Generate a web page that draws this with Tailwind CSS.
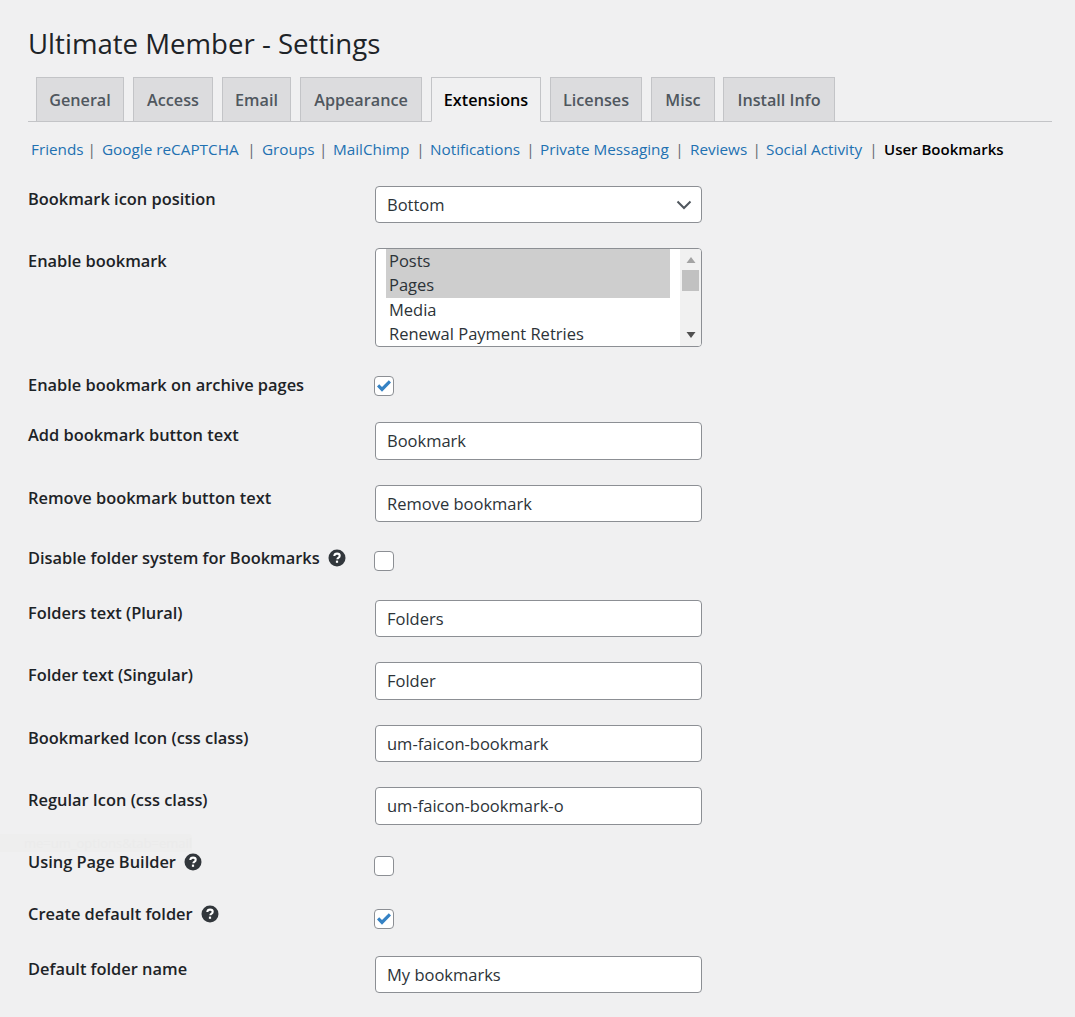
<!DOCTYPE html>
<html lang="en">
<head>
    <meta charset="UTF-8">
    <title>Ultimate Member - Settings</title>
    <script src="https://cdn.jsdelivr.net/npm/@tailwindcss/browser@4"></script>
</head>
<body class="bg-[#f0f0f1] text-[#1d2327] font-['Open_Sans',sans-serif] overflow-hidden">
<div class="relative h-[1017px] w-[1075px] pl-[28px] pr-[23px] pt-[23px]">
    <h1 class="text-[27.6px] leading-[40px] text-[#1d2327]">Ultimate Member - Settings</h1>

    <!-- tabs -->
    <nav class="mt-[14px] flex h-[45px] gap-[9px] border-b border-[#c3c4c7] pl-[8px] text-[16.2px] font-semibold leading-[44px] text-[#50575e]">
        <a class="h-[45px] w-[88px] border border-[#c3c4c7] bg-[#dcdcde] text-center">General</a>
        <a class="h-[45px] w-[80px] border border-[#c3c4c7] bg-[#dcdcde] text-center">Access</a>
        <a class="h-[45px] w-[69px] border border-[#c3c4c7] bg-[#dcdcde] text-center">Email</a>
        <a class="h-[45px] w-[122px] border border-[#c3c4c7] bg-[#dcdcde] text-center">Appearance</a>
        <a class="h-[45px] w-[110px] border border-[#c3c4c7] border-b-[#f0f0f1] bg-[#f0f0f1] text-center text-black">Extensions</a>
        <a class="h-[45px] w-[92px] border border-[#c3c4c7] bg-[#dcdcde] text-center">Licenses</a>
        <a class="h-[45px] w-[64px] border border-[#c3c4c7] bg-[#dcdcde] text-center">Misc</a>
        <a class="-ml-[1px] h-[45px] w-[112px] border border-[#c3c4c7] bg-[#dcdcde] text-center">Install Info</a>
    </nav>

    <!-- sub navigation -->
    <ul class="mt-[15px] flex h-[24px] pl-[3px] text-[15.3px] leading-[24px] text-[#646970]">
        <li class="flex w-[71px]"><a class="flex-1 text-[#2271b1]">Friends</a><span class="w-[19px] pr-[2px] text-center">|</span></li>
        <li class="flex w-[160px]"><a class="flex-1 text-[#2271b1]">Google reCAPTCHA</a><span class="w-[19px] pr-[2px] text-center">|</span></li>
        <li class="flex w-[71px]"><a class="flex-1 text-[#2271b1]">Groups</a><span class="w-[19px] pr-[1px] text-center">|</span></li>
        <li class="flex w-[97px]"><a class="flex-1 text-[#2271b1]">MailChimp</a><span class="w-[19px] text-center">|</span></li>
        <li class="flex w-[110px]"><a class="flex-1 text-[#2271b1]">Notifications</a><span class="w-[19px] text-center">|</span></li>
        <li class="flex w-[150px]"><a class="flex-1 text-[#2271b1]">Private Messaging</a><span class="w-[19px] pr-[2px] text-center">|</span></li>
        <li class="flex w-[76px]"><a class="flex-1 text-[#2271b1]">Reviews</a><span class="w-[19px] text-center">|</span></li>
        <li class="flex w-[118px]"><a class="flex-1 whitespace-nowrap text-[#2271b1]">Social Activity</a><span class="w-[19px] pr-[2px] text-center">|</span></li>
        <li class="font-semibold text-[15px] text-black">User Bookmarks</li>
    </ul>

    <!-- settings form -->
    <form class="mt-[25px] text-[16.4px] leading-[24px]">
        <div class="flex">
            <label class="mt-[1px] w-[347px] font-semibold">Bookmark icon position</label>
            <div class="relative flex h-[37px] w-[327px] items-center rounded-[4px] border border-[#8c8f94] bg-white pl-[11px] text-[16.5px] text-[#2c3338]">
                Bottom
                <svg class="absolute right-[9px] top-[11px] h-[14px] w-[16px]" viewBox="0 0 16 14" fill="none" stroke="#50575e" stroke-width="2"><path d="M1.500 3.500 8 10l6.500-6.500"/></svg>
            </div>
        </div>

        <div class="mt-[25px] flex">
            <label class="mt-[1px] w-[347px] font-semibold">Enable bookmark</label>
            <div class="relative h-[99px] w-[327px] overflow-hidden rounded-[4px] border border-[#8c8f94] bg-white pl-[10px] text-[16.5px] text-[#2c3338]">
                <div class="w-[284px] bg-[#cecece] pl-[3px] h-[24.500px] leading-[23px]">Posts</div>
                <div class="w-[284px] bg-[#cecece] pl-[3px] h-[24.500px] leading-[22px]">Pages</div>
                <div class="pl-[3px] h-[24.500px] leading-[23px]">Media</div>
                <div class="pl-[3px] h-[24.500px] leading-[22px] whitespace-nowrap">Renewal Payment Retries</div>
                <!-- list scrollbar -->
                <div class="absolute bottom-0 right-0 top-0 w-[21px] bg-[#f1f1f1]">
                    <svg class="absolute left-[6px] top-[8px] h-[6px] w-[10px]" viewBox="0 0 10 6"><path d="M5 0l4.500 6h-9z" fill="#a3a3a3"/></svg>
                    <div class="absolute left-[2px] top-[21px] h-[21px] w-[17px] bg-[#c1c1c1]"></div>
                    <svg class="absolute bottom-[8px] left-[6px] h-[6px] w-[10px]" viewBox="0 0 10 6"><path d="M5 6L.5 0h9z" fill="#505050"/></svg>
                </div>
            </div>
        </div>

        <div class="mt-[29px] flex">
            <label class="-mt-[3px] w-[346px] font-semibold">Enable bookmark on archive pages</label>
            <span class="flex h-[20px] w-[20px] items-center justify-center rounded-[4px] border border-[#8c8f94] bg-white">
                <svg class="h-[18px] w-[18px]" viewBox="0 0 18 18"><path d="M2 9.500l2.200-2.200L7 10l6.800-6.700L16 5.500l-9 9.200z" fill="#3582c4"/></svg>
            </span>
        </div>

        <div class="mt-[25px] flex">
            <label class="mt-[1px] w-[347px] font-semibold">Add bookmark button text</label>
            <input class="h-[38px] w-[327px] rounded-[4px] border border-[#8c8f94] bg-white px-[11px] pb-[2px] text-[16.5px] text-[#2c3338]" value="Bookmark">
        </div>

        <div class="mt-[25px] flex">
            <label class="mt-[1px] w-[347px] font-semibold">Remove bookmark button text</label>
            <input class="h-[37px] w-[327px] rounded-[4px] border border-[#8c8f94] bg-white px-[11px] text-[16.5px] text-[#2c3338]" value="Remove bookmark">
        </div>

        <div class="mt-[29px] flex">
            <label class="-mt-[5px] flex h-[24px] w-[346px] items-center gap-[8px] font-semibold">Disable folder system for Bookmarks
                <svg class="h-[18px] w-[18px]" viewBox="0 0 18 18"><circle cx="9" cy="9" r="8.500" fill="#32373c"/><path d="M6.300 7q.2-2.400 2.800-2.400 2.600 0 2.600 2.200 0 1.300-1.400 2.100-.9.500-.9 1.300" fill="none" stroke="#fff" stroke-width="2.100"/><rect x="7.900" y="11.600" width="2.200" height="2.200" fill="#fff"/></svg>
            </label>
            <span class="block h-[20px] w-[20px] rounded-[4px] border border-[#8c8f94] bg-white"></span>
        </div>

        <div class="mt-[29px] flex">
            <label class="mt-[1px] w-[347px] font-semibold">Folders text (Plural)</label>
            <input class="h-[37px] w-[327px] rounded-[4px] border border-[#8c8f94] bg-white px-[11px] text-[16.5px] text-[#2c3338]" value="Folders">
        </div>

        <div class="mt-[25px] flex">
            <label class="mt-[1px] w-[347px] font-semibold">Folder text (Singular)</label>
            <input class="h-[38px] w-[327px] rounded-[4px] border border-[#8c8f94] bg-white px-[11px] pb-[2px] text-[16.5px] text-[#2c3338]" value="Folder">
        </div>

        <div class="mt-[25px] flex">
            <label class="mt-[1px] w-[347px] font-semibold">Bookmarked Icon (css class)</label>
            <input class="h-[37px] w-[327px] rounded-[4px] border border-[#8c8f94] bg-white px-[11px] text-[16.5px] text-[#2c3338]" value="um-faicon-bookmark">
        </div>

        <div class="mt-[25px] flex">
            <label class="mt-[1px] w-[347px] font-semibold">Regular Icon (css class)</label>
            <input class="h-[38px] w-[327px] rounded-[4px] border border-[#8c8f94] bg-white px-[11px] pb-[2px] text-[16.5px] text-[#2c3338]" value="um-faicon-bookmark-o">
        </div>

        <div class="mt-[31px] flex">
            <label class="-mt-[6px] flex h-[24px] w-[346px] items-center gap-[8px] font-semibold">Using Page Builder
                <svg class="h-[18px] w-[18px]" viewBox="0 0 18 18"><circle cx="9" cy="9" r="8.500" fill="#32373c"/><path d="M6.300 7q.2-2.400 2.800-2.400 2.600 0 2.600 2.200 0 1.300-1.400 2.100-.9.500-.9 1.300" fill="none" stroke="#fff" stroke-width="2.100"/><rect x="7.900" y="11.600" width="2.200" height="2.200" fill="#fff"/></svg>
            </label>
            <span class="block h-[20px] w-[20px] rounded-[4px] border border-[#8c8f94] bg-white"></span>
        </div>

        <div class="mt-[33px] flex">
            <label class="-mt-[7px] flex h-[24px] w-[346px] items-center gap-[8px] font-semibold">Create default folder
                <svg class="h-[18px] w-[18px]" viewBox="0 0 18 18"><circle cx="9" cy="9" r="8.500" fill="#32373c"/><path d="M6.300 7q.2-2.400 2.800-2.400 2.600 0 2.600 2.200 0 1.300-1.400 2.100-.9.500-.9 1.300" fill="none" stroke="#fff" stroke-width="2.100"/><rect x="7.900" y="11.600" width="2.200" height="2.200" fill="#fff"/></svg>
            </label>
            <span class="flex h-[20px] w-[20px] items-center justify-center rounded-[4px] border border-[#8c8f94] bg-white">
                <svg class="h-[18px] w-[18px]" viewBox="0 0 18 18"><path d="M2 9.500l2.200-2.200L7 10l6.800-6.700L16 5.500l-9 9.200z" fill="#3582c4"/></svg>
            </span>
        </div>

        <div class="mt-[27px] flex">
            <label class="mt-[1px] w-[347px] font-semibold">Default folder name</label>
            <input class="h-[37px] w-[327px] rounded-[4px] border border-[#8c8f94] bg-white px-[11px] text-[16.5px] text-[#2c3338]" value="My bookmarks">
        </div>
    </form>

    <!-- fading link preview left over in the capture -->
    <div class="absolute left-0 top-[834px] h-[18px] w-[192px] overflow-hidden rounded-tr-[3px] bg-[#eeeeee] text-right text-[13px] leading-[18px] text-[#ebebeb] whitespace-nowrap">me=um_options&amp;tab=email</div>
</div>
</body>
</html>
